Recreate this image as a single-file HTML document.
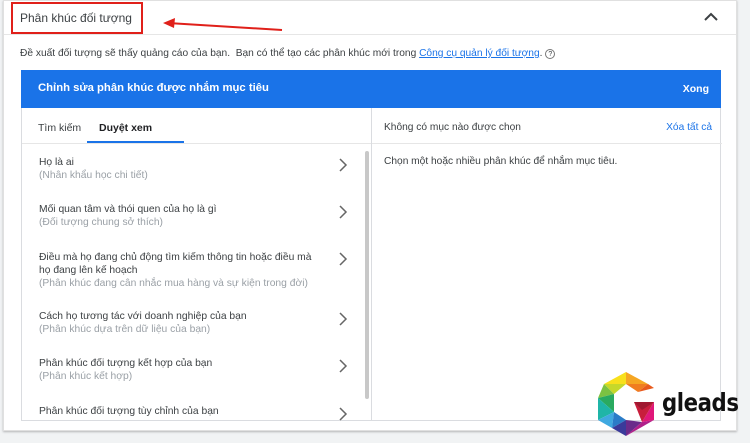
<!DOCTYPE html>
<html><head><meta charset="utf-8"><style>
*{margin:0;padding:0;box-sizing:border-box}
body{width:750px;height:443px;background:#f1f3f4;font-family:"Liberation Sans",sans-serif;position:relative;overflow:hidden;color:#3c4043}
.card{position:absolute;left:3px;top:0;width:734px;height:431px;background:#fff;border:1px solid #e0e0e0;box-shadow:0 1px 2px rgba(0,0,0,.25)}
.hdr{position:absolute;left:0;top:0;width:100%;height:34px;border-bottom:1px solid #e6e6e6}
.abs{position:absolute;white-space:nowrap}
.blue{position:absolute;left:17px;top:69px;width:700px;height:38px;background:#1a73e8;color:#fff}
.panel{position:absolute;left:17px;top:107px;width:700px;height:313px;border:1px solid #dadce0;border-top:none}
.item{position:absolute;left:17px;font-size:10.3px;color:#3c4043;line-height:13px;white-space:nowrap}
.item span{color:#9aa0a6;display:block}
.chev{position:absolute;left:316px}
</style></head><body>
<div class="card">
 <div class="hdr"></div>
 <div class="abs" style="left:16px;top:10px;font-size:12px;color:#3c4043">Phân khúc đối tượng</div>
 <svg class="abs" style="left:699px;top:10px" width="16" height="12"><path d="M2 9 L8 3 L14 9" stroke="#3c4043" stroke-width="2" fill="none"/></svg>
 <div class="abs" style="left:16px;top:47px;font-size:10.2px;color:#3c4043">Đề xuất đối tượng sẽ thấy quảng cáo của bạn.&nbsp; Bạn có thể tạo các phân khúc mới trong <span style="color:#1a73e8;text-decoration:underline">Công cụ quản lý đối tượng</span>. <span style="border:1px solid #777;border-radius:50%;font-size:7px;display:inline-block;width:10px;height:10px;text-align:center;line-height:9px">?</span></div>
 <div class="blue">
  <div class="abs" style="left:17px;top:12px;font-size:11.3px;font-weight:bold">Chỉnh sửa phân khúc được nhắm mục tiêu</div>
  <div class="abs" style="right:12px;top:13px;font-size:10.5px;font-weight:bold">Xong</div>
 </div>
 <div class="panel">
  <div style="position:absolute;left:349px;top:0;width:1px;height:100%;background:#dadce0"></div>
  <div style="position:absolute;left:0;top:35px;width:349px;height:1px;background:#e6e6e6"></div>
  <div style="position:absolute;left:350px;top:35px;width:350px;height:1px;background:#e6e6e6"></div>
  <div class="abs" style="left:16px;top:14px;font-size:10.5px">Tìm kiếm</div>
  <div class="abs" style="left:77px;top:14px;font-size:10.5px;font-weight:bold;color:#202124">Duyệt xem</div>
  <div style="position:absolute;left:65px;top:33px;width:97px;height:2px;background:#1a73e8"></div>
  <div style="position:absolute;left:343px;top:43px;width:4px;height:248px;background:#c8c8c8;border-radius:2px"></div>
  <div class="item" style="top:48px">Họ là ai<span>(Nhân khẩu học chi tiết)</span></div>
  <svg class="chev" style="top:49px" width="10" height="16"><path d="M2 2 L8 8 L2 14" stroke="#666" stroke-width="1.5" fill="none"/></svg>
  <div class="item" style="top:95px">Mối quan tâm và thói quen của họ là gì<span>(Đối tượng chung sở thích)</span></div>
  <svg class="chev" style="top:96px" width="10" height="16"><path d="M2 2 L8 8 L2 14" stroke="#666" stroke-width="1.5" fill="none"/></svg>
  <div class="item" style="top:143px">Điều mà họ đang chủ động tìm kiếm thông tin hoặc điều mà<br>họ đang lên kế hoạch<span>(Phân khúc đang cân nhắc mua hàng và sự kiện trong đời)</span></div>
  <svg class="chev" style="top:143px" width="10" height="16"><path d="M2 2 L8 8 L2 14" stroke="#666" stroke-width="1.5" fill="none"/></svg>
  <div class="item" style="top:202px">Cách họ tương tác với doanh nghiệp của bạn<span>(Phân khúc dựa trên dữ liệu của bạn)</span></div>
  <svg class="chev" style="top:203px" width="10" height="16"><path d="M2 2 L8 8 L2 14" stroke="#666" stroke-width="1.5" fill="none"/></svg>
  <div class="item" style="top:249px">Phân khúc đối tượng kết hợp của bạn<span>(Phân khúc kết hợp)</span></div>
  <svg class="chev" style="top:250px" width="10" height="16"><path d="M2 2 L8 8 L2 14" stroke="#666" stroke-width="1.5" fill="none"/></svg>
  <div class="item" style="top:297px">Phân khúc đối tượng tùy chỉnh của bạn</div>
  <svg class="chev" style="top:298px" width="10" height="16"><path d="M2 2 L8 8 L2 14" stroke="#666" stroke-width="1.5" fill="none"/></svg>
  <div class="abs" style="left:362px;top:14px;font-size:10.2px">Không có mục nào được chọn</div>
  <div class="abs" style="right:8px;top:14px;font-size:10.2px;color:#1a73e8">Xóa tất cả</div>
  <div class="abs" style="left:362px;top:48px;font-size:10.2px">Chọn một hoặc nhiều phân khúc để nhắm mục tiêu.</div>
 </div>
</div>
<div style="position:absolute;left:11px;top:2px;width:132px;height:32px;border:2px solid #e0201a"></div>
<svg class="abs" style="left:160px;top:14px" width="125" height="22"><path d="M122 16 L8 9" stroke="#e0201a" stroke-width="2"/><path d="M3 9 L15 4 L14 14 Z" fill="#e0201a"/></svg>
<svg class="abs" style="left:598px;top:372px" width="60" height="64">
 <polygon points="28,0 50,12 28,12" fill="#f5a623"/>
 <polygon points="28,0 6,12 28,12" fill="#f8e01c"/>
 <polygon points="6,12 28,12 16,22" fill="#c6d82a"/>
 <polygon points="6,12 16,22 0,26" fill="#7cc242"/>
 <polygon points="0,26 16,22 16,40" fill="#2aaa60"/>
 <polygon points="0,26 0,48 16,40" fill="#1fb5a8"/>
 <polygon points="0,48 16,40 14,56" fill="#40a9e0"/>
 <polygon points="14,56 16,40 28,48" fill="#2b7cc8"/>
 <polygon points="14,56 28,64 28,48" fill="#3a3a9a"/>
 <polygon points="28,64 28,48 44,50" fill="#6a2b8a"/>
 <polygon points="28,64 56,48 44,50" fill="#b0208a"/>
 <polygon points="44,50 56,48 56,30" fill="#e0187a"/>
 <polygon points="44,50 56,30 36,30" fill="#c81e3c"/>
 <polygon points="36,30 56,30 44,38" fill="#a01830"/>
 <polygon points="50,12 28,12 40,20" fill="#f07d20"/>
 <polygon points="50,12 56,16 40,20" fill="#e85a1c"/>
</svg>
<div class="abs" style="left:662px;top:388px;font-size:25px;font-weight:bold;color:#111;letter-spacing:-0.5px;font-family:'DejaVu Sans','Liberation Sans',sans-serif;transform:scaleX(.85);transform-origin:left">gleads</div>
</body></html>
